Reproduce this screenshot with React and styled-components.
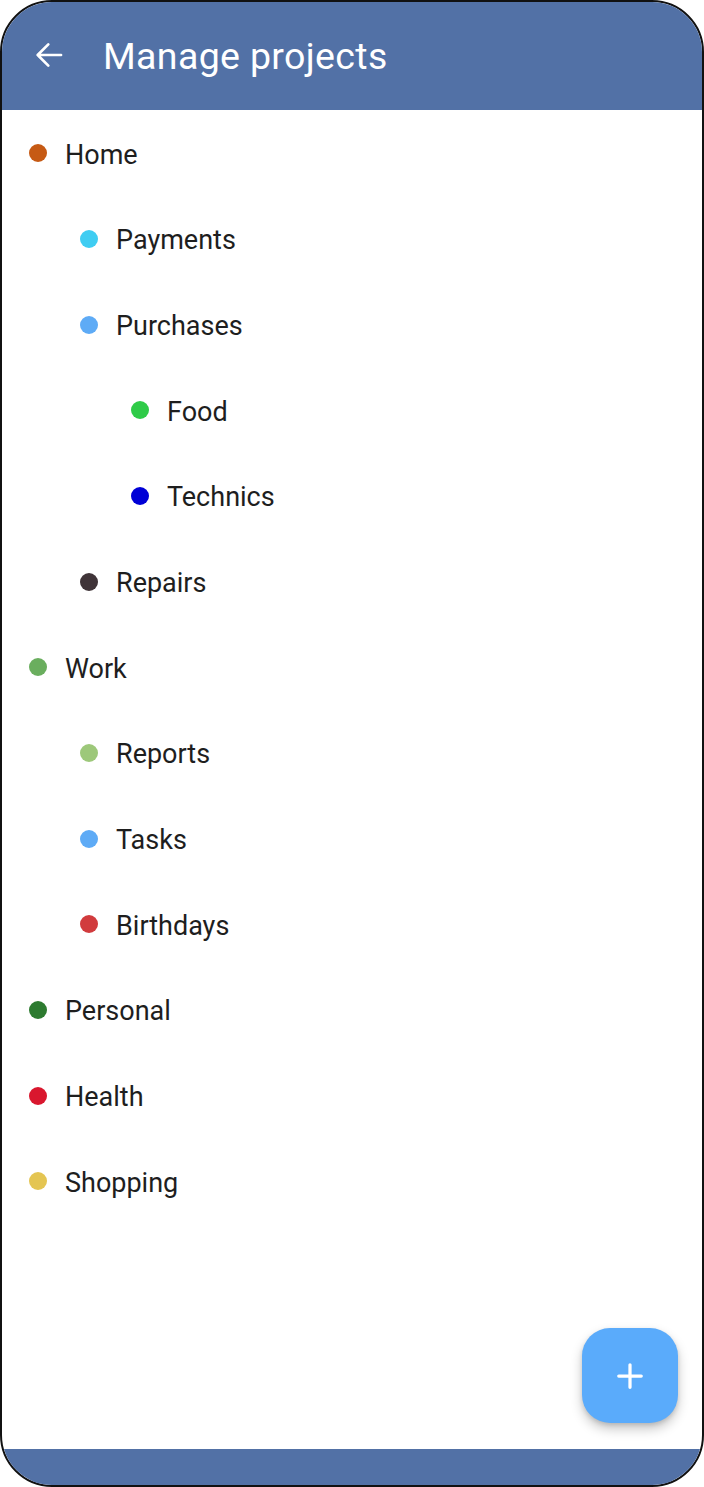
import React from "react";
import styled, { createGlobalStyle } from "styled-components";

const GlobalStyle = createGlobalStyle`
  html, body {
    margin: 0;
    padding: 0;
    background: #ffffff;
  }
  body {
    font-family: Roboto, "Liberation Sans", Arial, sans-serif;
  }
`;

const projects = [
  { name: "Home", color: "#c65a14", level: 0 },
  { name: "Payments", color: "#3fcdf2", level: 1 },
  { name: "Purchases", color: "#5eabf6", level: 1 },
  { name: "Food", color: "#2fcb48", level: 2 },
  { name: "Technics", color: "#0000d6", level: 2 },
  { name: "Repairs", color: "#3f3438", level: 1 },
  { name: "Work", color: "#6aae5e", level: 0 },
  { name: "Reports", color: "#9dc87a", level: 1 },
  { name: "Tasks", color: "#5eabf6", level: 1 },
  { name: "Birthdays", color: "#d13b3d", level: 1 },
  { name: "Personal", color: "#2d7b30", level: 0 },
  { name: "Health", color: "#d9172e", level: 0 },
  { name: "Shopping", color: "#e4c552", level: 0 },
];

function App() {
  return (
    <>
      <GlobalStyle />
      <Frame>
        <Header>
          <BackButton aria-label="Back">
            <svg width="34" height="34" viewBox="0 0 24 24" fill="none">
              <path
                d="M20.5 12H4M11.5 4.5L4 12l7.5 7.5"
                stroke="#ffffff"
                strokeWidth="1.9"
                strokeLinecap="round"
                strokeLinejoin="round"
              />
            </svg>
          </BackButton>
          <Title>Manage projects</Title>
        </Header>

        <Content>
          <List>
            {projects.map((p) => (
              <Row key={p.name} $level={p.level}>
                <Dot $color={p.color} />
                <Name>{p.name}</Name>
              </Row>
            ))}
          </List>

          <Fab aria-label="Add project">
            <svg width="30" height="30" viewBox="0 0 24 24" fill="none">
              <path
                d="M12 3v18M3 12h18"
                stroke="#ffffff"
                strokeWidth="2.6"
                strokeLinecap="round"
              />
            </svg>
          </Fab>
        </Content>

        <BottomBar />
      </Frame>
    </>
  );
}

const Frame = styled.div`
  width: 704px;
  height: 1487px;
  box-sizing: border-box;
  border: 2px solid #111111;
  border-radius: 52px;
  overflow: hidden;
  display: flex;
  flex-direction: column;
  background: #ffffff;
`;

const Header = styled.header`
  height: 108px;
  flex-shrink: 0;
  background: #5271a6;
  display: flex;
  align-items: center;
  padding-left: 27px;
  gap: 34px;
`;

const BackButton = styled.button`
  border: none;
  background: transparent;
  padding: 0;
  width: 40px;
  height: 40px;
  display: flex;
  align-items: center;
  justify-content: center;
  margin-top: -3px;
`;

const Title = styled.h1`
  margin: 0;
  color: #ffffff;
  font-family: Roboto, "Liberation Sans", Arial, sans-serif;
  font-weight: 400;
  font-size: 37.5px;
  letter-spacing: 0.35px;
`;

const Content = styled.main`
  flex: 1;
  position: relative;
`;

const List = styled.ul`
  list-style: none;
  margin: 0;
  padding: 2px 0 0 0;
`;

const Row = styled.li`
  height: 85.67px;
  display: flex;
  align-items: center;
  gap: 18px;
  padding-left: ${(p) => 27 + p.$level * 51}px;
`;

const Dot = styled.span`
  width: 18px;
  height: 18px;
  border-radius: 50%;
  background: ${(p) => p.$color};
  flex-shrink: 0;
  margin-top: -3px;
`;

const Name = styled.span`
  font-size: 27px;
  color: #1e1e1e;
  font-family: Roboto, "Liberation Sans", Arial, sans-serif;
`;

const Fab = styled.button`
  position: absolute;
  right: 24px;
  bottom: 26px;
  width: 96px;
  height: 95px;
  border: none;
  border-radius: 28px;
  background: #5aabfb;
  box-shadow: 0 6px 12px rgba(0, 0, 0, 0.22), 0 2px 4px rgba(0, 0, 0, 0.12);
  display: flex;
  align-items: center;
  justify-content: center;
  padding: 0;
`;

const BottomBar = styled.footer`
  height: 36px;
  flex-shrink: 0;
  background: #5271a6;
`;

export default App;
